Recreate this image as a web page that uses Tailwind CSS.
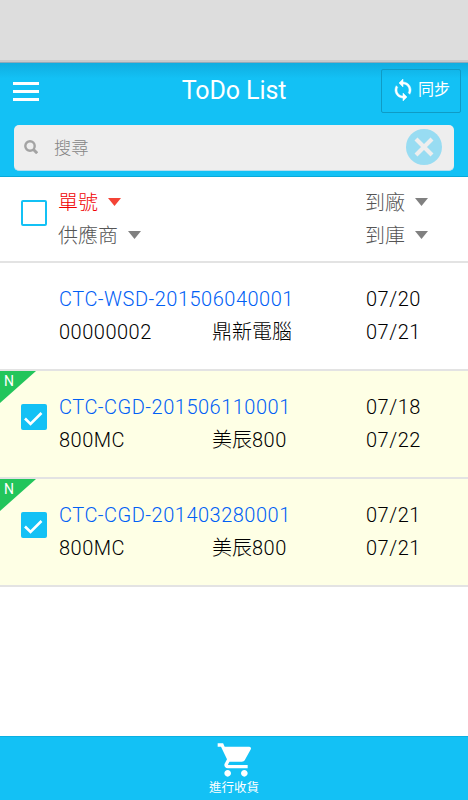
<!DOCTYPE html>
<html lang="zh-Hant">
<head>
  <meta charset="UTF-8" />
  <meta name="viewport" content="width=device-width, initial-scale=1.0"/>
  <title>ToDo List</title>
  <script src="https://cdn.jsdelivr.net/npm/@tailwindcss/browser@4"></script>
</head>
<body class="bg-white h-[800px] flex flex-col overflow-hidden font-['Roboto','Noto_Sans_CJK_TC',sans-serif]">

  <!-- Status bar -->
  <div class="h-[62px] shrink-0 bg-[#dddddd] border-b-2 border-[#c9c9ca]"></div>

  <!-- Header -->
  <header class="h-[115px] shrink-0 bg-[#13c1f5] border-b border-[#08a9da]">
    <div class="h-[63px] flex items-start bg-linear-to-b from-[#10ade0] to-[#13c1f5] to-25% border-t border-[#8fa9ba]">
      <div class="w-[104px] pl-[13px] pt-[19px] flex flex-col gap-[5px]">
        <span class="w-[26px] h-[3px] bg-white"></span>
        <span class="w-[26px] h-[3px] bg-white"></span>
        <span class="w-[26px] h-[3px] bg-white"></span>
      </div>
      <h1 class="flex-1 text-center text-[25px] leading-[30px] pt-[13px] pr-px text-white tracking-[-0.1px]">ToDo List</h1>
      <button class="mt-[6px] mr-[7px] ml-[16px] w-[80px] h-[44px] flex items-center pl-[9px] gap-[3px] border border-[#0f9bc5] rounded-[2px] text-white text-base leading-5">
        <svg class="w-6 h-6 mb-[2px] fill-white stroke-white" stroke-width="0.5" viewBox="0 0 24 24"><path d="M12 4V1L8 5l4 4V6c3.31 0 6 2.69 6 6 0 1.01-.25 1.97-.7 2.8l1.46 1.46C19.54 15.03 20 13.57 20 12c0-4.42-3.58-8-8-8zm0 14c-3.31 0-6-2.69-6-6 0-1.01.25-1.97.7-2.8L5.24 7.74C4.46 8.97 4 10.43 4 12c0 4.42 3.58 8 8 8v3l4-4-4-4v3z"/></svg>
        <span class="whitespace-nowrap pb-[2px]">同步</span>
      </button>
    </div>
    <div class="ml-[14px] w-[440px] h-[46px] flex items-center rounded-[5px] bg-[#eeeeee] border-b border-[#b5ddec] pl-[10px] pr-[12px]">
      <svg class="w-[14px] h-[14px] mb-px" viewBox="0 0 14 14" fill="none" stroke="#a3a3a3"><circle cx="6" cy="6" r="4.7" stroke-width="2.4"/><path d="M9.2 9.2l4 4" stroke-width="3"/></svg>
      <span class="ml-[16px] flex-1 text-[17.3px] leading-6 font-light text-[#858585]">搜尋</span>
      <svg class="w-[36px] h-[36px] mb-px" viewBox="0 0 36 36"><circle cx="18" cy="18" r="18" fill="#98dcf2"/><path d="M10 10l16 16M26 10l-16 16" stroke="#eeeeee" stroke-width="4.2"/></svg>
    </div>
  </header>

  <main class="flex-1 text-[20px] leading-[33px]">
    <!-- Sort header -->
    <div class="h-[86px] border-b-2 border-[#e3e3e3] flex pt-[10px] font-light text-[#555555]">
      <div class="w-[58px] pl-[21px] pt-[13px]">
        <div class="w-[26px] h-[26px] border-2 border-[#13c1f5] rounded-[2px]"></div>
      </div>
      <div class="w-[307px]">
        <div class="flex items-center gap-[10px] text-[#f00000]">單號
          <svg class="w-[13px] h-2 mb-1 fill-[#f44336]" viewBox="0 0 13 8"><path d="M0 0h13L6.5 8z"/></svg>
        </div>
        <div class="flex items-center gap-[10px]">供應商
          <svg class="w-[13px] h-2 mb-1 fill-[#808080]" viewBox="0 0 13 8"><path d="M0 0h13L6.5 8z"/></svg>
        </div>
      </div>
      <div>
        <div class="flex items-center gap-[10px]">到廠
          <svg class="w-[13px] h-2 mb-1 fill-[#808080]" viewBox="0 0 13 8"><path d="M0 0h13L6.5 8z"/></svg>
        </div>
        <div class="flex items-center gap-[10px]">到庫
          <svg class="w-[13px] h-2 mb-1 fill-[#808080]" viewBox="0 0 13 8"><path d="M0 0h13L6.5 8z"/></svg>
        </div>
      </div>
    </div>

    <!-- Rows -->
    <div class="h-[108px] border-b-2 border-[#e3e3e3] flex pt-[20px] pl-[59px] font-light text-black">
      <div class="w-[307px]">
        <div class="text-[#0060f5] tracking-[0.5px]">CTC-WSD-201506040001</div>
        <div class="flex"><span class="w-[153px] tracking-[0.5px]">00000002</span><span>鼎新電腦</span></div>
      </div>
      <div class="tracking-[0.5px]">
        <div>07/20</div>
        <div>07/21</div>
      </div>
    </div>

    <div class="relative h-[108px] border-b-2 border-[#e3e3e3] bg-[#feffe5] flex pt-[20px] font-light text-black">
      <svg class="absolute left-0 top-0 w-[36px] h-[32px] fill-[#22c55b]" viewBox="0 0 36 32"><path d="M0 0h36L0 32z"/></svg>
      <span class="absolute left-[4px] top-[2px] text-[14px] leading-4 font-normal text-white">N</span>
      <div class="w-[59px] pl-[21px] pt-[13px]">
        <svg class="w-[26px] h-[26px]" viewBox="0 0 26 26"><rect width="26" height="26" rx="2" fill="#13c1f5"/><path d="M4 14.5l5.5 5.5L20.5 9" fill="none" stroke="#fff" stroke-width="2.6"/></svg>
      </div>
      <div class="w-[307px]">
        <div class="text-[#0060f5] tracking-[0.5px]">CTC-CGD-201506110001</div>
        <div class="flex"><span class="w-[153px] tracking-[0.5px]">800MC</span><span>美辰<span class="tracking-[0.5px]">800</span></span></div>
      </div>
      <div class="tracking-[0.5px]">
        <div>07/18</div>
        <div>07/22</div>
      </div>
    </div>

    <div class="relative h-[108px] border-b-2 border-[#e3e3e3] bg-[#feffe5] flex pt-[20px] font-light text-black">
      <svg class="absolute left-0 top-0 w-[36px] h-[32px] fill-[#22c55b]" viewBox="0 0 36 32"><path d="M0 0h36L0 32z"/></svg>
      <span class="absolute left-[4px] top-[2px] text-[14px] leading-4 font-normal text-white">N</span>
      <div class="w-[59px] pl-[21px] pt-[13px]">
        <svg class="w-[26px] h-[26px]" viewBox="0 0 26 26"><rect width="26" height="26" rx="2" fill="#13c1f5"/><path d="M4 14.5l5.5 5.5L20.5 9" fill="none" stroke="#fff" stroke-width="2.6"/></svg>
      </div>
      <div class="w-[307px]">
        <div class="text-[#0060f5] tracking-[0.5px]">CTC-CGD-201403280001</div>
        <div class="flex"><span class="w-[153px] tracking-[0.5px]">800MC</span><span>美辰<span class="tracking-[0.5px]">800</span></span></div>
      </div>
      <div class="tracking-[0.5px]">
        <div>07/21</div>
        <div>07/21</div>
      </div>
    </div>
  </main>

  <!-- Footer -->
  <footer class="h-[64px] shrink-0 bg-[#13c1f5] border-t border-[#0bb0e2] flex flex-col items-center pt-[3px] text-white">
    <svg class="w-[40px] h-[40px] ml-[3px] fill-white" viewBox="0 0 24 24"><path d="M7 18c-1.1 0-1.99.9-1.99 2S5.9 22 7 22s2-.9 2-2-.9-2-2-2zM1 2v2h2l3.6 7.59-1.35 2.45c-.16.28-.25.61-.25.96 0 1.1.9 2 2 2h12v-2H7.42c-.14 0-.25-.11-.25-.25l.03-.12.9-1.63h7.45c.75 0 1.41-.41 1.75-1.03l3.58-6.49c.08-.14.12-.31.12-.48 0-.55-.45-1-1-1H5.21l-.94-2H1zm16 16c-1.1 0-1.99.9-1.99 2s.89 2 1.99 2 2-.9 2-2-.9-2-2-2z"/></svg>
    <span class="text-[12.5px] leading-4">進行收貨</span>
  </footer>

</body>
</html>
